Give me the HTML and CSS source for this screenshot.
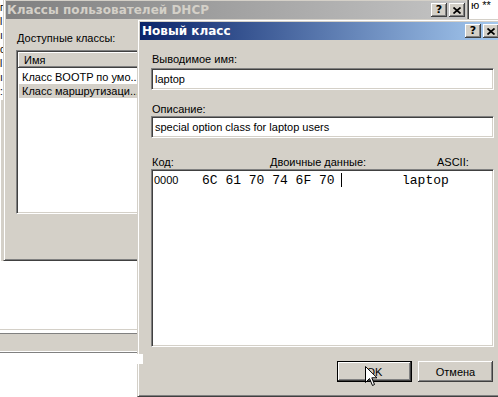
FILE: index.html
```html
<!DOCTYPE html>
<html lang="ru">
<head>
    <meta charset="UTF-8">
    <title>Новый класс</title>
    <link rel="stylesheet" href="styles.css">
</head>
<body>

<div class="screen">
    <!-- bits of the windows lying behind -->
    <div class="behind-left">
        <div>г</div>
        <div>l</div>
        <div>ı</div>
        <div>c</div>
        <div>l</div>
        <div>ı</div>
        <div>:</div>
    </div>
    <div class="behind-left-frame"></div>
    <div class="behind-right">ю **</div>
    <div class="console-status"></div>

    <!-- DHCP classes window (inactive) -->
    <div class="window classes">
        <div class="caption inactive">
            <span class="caption-text">Классы пользователей DHCP</span>
            <span class="caption-buttons">
                <span class="cap-btn help">?</span>
                <span class="cap-btn">
                    <svg width="8" height="7" viewBox="0 0 8 7"><path d="M0.5 0.5 L7.5 6.5 M7.5 0.5 L0.5 6.5" stroke="#000" stroke-width="1.7" fill="none"/></svg>
                </span>
            </span>
        </div>
        <div class="classes-body">
            <div class="field-label">Доступные классы:</div>
            <div class="listview">
                <div class="lv-header"><span class="lv-col">Имя</span></div>
                <div class="lv-rows">
                    <div class="lv-row">Класс BOOTP по умо...</div>
                    <div class="lv-row selected">Класс маршрутизаци...</div>
                </div>
            </div>
        </div>
    </div>

    <div class="notch"></div>

    <!-- New class dialog (active) -->
    <div class="window new-class">
        <div class="caption active">
            <span class="caption-text">Новый класс</span>
            <span class="caption-buttons">
                <span class="cap-btn help">?</span>
                <span class="cap-btn">
                    <svg width="8" height="7" viewBox="0 0 8 7"><path d="M0.5 0.5 L7.5 6.5 M7.5 0.5 L0.5 6.5" stroke="#000" stroke-width="1.7" fill="none"/></svg>
                </span>
            </span>
        </div>
        <div class="dialog-body">
            <div class="field-label">Выводимое имя:</div>
            <div class="textbox name-box">laptop</div>

            <div class="field-label desc-label">Описание:</div>
            <div class="textbox">special option class for laptop users</div>

            <div class="hex-labels">
                <span class="lbl-code">Код:</span>
                <span class="lbl-binary">Двоичные данные:</span>
                <span>ASCII:</span>
            </div>
            <div class="hexbox">
                <div class="hex-row">
                    <span class="hex-addr">0000</span>
                    <span class="hex-bytes">6C 61 70 74 6F 70</span>
                    <span class="hex-caret"></span>
                    <span class="hex-ascii">laptop</span>
                </div>
            </div>

            <div class="button-row">
                <button class="btn default">OK</button>
                <button class="btn">Отмена</button>
            </div>
        </div>
    </div>

    <svg class="cursor" width="13" height="21" viewBox="0 0 13 21">
        <path d="M0.5 0.5 V16.5 L4.5 12.5 L7.5 19.5 L9.5 18.5 L6.8 11.8 H12 Z" fill="#fff" stroke="#000" stroke-width="1" stroke-linejoin="miter"/>
    </svg>
</div>

</body>
</html>
```

FILE: styles.css
```css
* { box-sizing: border-box; }
body {
    margin: 0;
    background: #fff;
    font-family: "Liberation Sans", Arial, sans-serif;
    font-size: 11px;
    color: #000;
    overflow: hidden;
}
.screen {
    position: relative;
    width: 498px;
    height: 397px;
    overflow: hidden;
    background: #fff;
}

/* stuff behind */
.behind-left {
    position: absolute;
    left: 0;
    top: 1px;
    width: 3px;
    line-height: 14px;
    font-size: 10px;
}
.behind-left-frame {
    position: absolute;
    left: 0;
    top: 100px;
    width: 3px;
    height: 161px;
    background: #d4d0c8;
    border-left: 1px solid #fff;
}
.behind-right {
    position: absolute;
    left: 471px;
    top: 0;
    line-height: 11px;
    white-space: nowrap;
}
.console-status {
    position: absolute;
    left: 0;
    top: 329px;
    width: 150px;
    height: 24px;
    border-top: 1px solid #d4d0c8;
    border-bottom: 1px solid #808080;
    background: linear-gradient(#fff 0, #fff 3px, #808080 3px, #808080 4px, #d4d0c8 4px, #d4d0c8 21px, #fff 21px, #fff 22px);
}
.notch {
    position: absolute;
    left: 137px;
    top: 354px;
    width: 6px;
    height: 10px;
    background: #fff;
    z-index: 2;
}

/* windows */
.window {
    position: absolute;
    display: flex;
    flex-direction: column;
    background: #d4d0c8;
    border: 1px solid;
    border-color: #d4d0c8 #404040 #404040 #d4d0c8;
    box-shadow: inset 1px 1px #fff, inset -1px -1px #808080;
    padding: 2px;
}
.classes {
    left: 3px;
    top: -2px;
    width: 466px;
    height: 263px;
}
.new-class {
    left: 137px;
    top: 19px;
    width: 367px;
    height: 378px;
}
.caption {
    height: 18px;
    display: flex;
    align-items: center;
    padding: 0 2px 0 2px;
    font-family: "DejaVu Sans", sans-serif;
    font-weight: bold;
    white-space: nowrap;
}
.caption.inactive {
    background: linear-gradient(to right, #808080, #c4c4c4);
    color: #d4d0c8;
    padding-left: 1px;
    padding-right: 1px;
}
.caption.active {
    background: linear-gradient(to right, #0a246a, #a6caf0);
    color: #fff;
}
.caption-text {
    flex: 1;
    font-size: 12px;
}
.caption-buttons {
    display: flex;
    gap: 2px;
}
.cap-btn {
    width: 16px;
    height: 14px;
    display: flex;
    align-items: center;
    justify-content: center;
    background: #d4d0c8;
    box-shadow: inset -1px -1px #404040, inset 1px 1px #fff, inset -2px -2px #808080;
    color: #000;
}
.cap-btn.help {
    font-size: 11px;
    line-height: 14px;
    padding-bottom: 1px;
}

.field-label {
    line-height: 13px;
    padding-left: 1px;
}

/* DHCP classes list */
.classes-body {
    flex: 1;
    padding: 13px 0 0 10px;
}
.listview {
    width: 200px;
    height: 164px;
    margin-top: 5px;
    background: #fff;
    border: 1px solid;
    border-color: #808080 #fff #fff #808080;
    box-shadow: inset 1px 1px #404040, inset -1px -1px #d4d0c8;
    padding: 1px;
}
.lv-header {
    height: 16px;
    line-height: 17px;
    background: #d4d0c8;
    box-shadow: inset -1px -1px #404040, inset 1px 1px #fff, inset -2px -2px #808080;
    padding-left: 6px;
}
.lv-rows { margin-top: 2px; }
.lv-row {
    height: 14px;
    line-height: 14px;
    margin-left: 1px;
    padding-left: 3px;
    white-space: nowrap;
}
.lv-row.selected { background: #d4d0c8; }

/* New class dialog */
.dialog-body {
    flex: 1;
    display: flex;
    flex-direction: column;
    padding: 13px 0 0 11px;
}
.textbox {
    width: 343px;
    height: 22px;
    background: #fff;
    border: 1px solid;
    border-color: #808080 #fff #fff #808080;
    box-shadow: inset 1px 1px #404040, inset -1px -1px #d4d0c8;
    padding: 4px 0 0 3px;
    line-height: 13px;
    white-space: nowrap;
}
.name-box { margin-top: 2px; }
.desc-label { margin-top: 13px; }
.hex-labels {
    display: flex;
    margin-top: 18px;
    line-height: 13px;
    padding-left: 1px;
}
.lbl-code { width: 118px; }
.lbl-binary { width: 167px; }
.hexbox {
    width: 343px;
    height: 178px;
    background: #fff;
    border: 1px solid;
    border-color: #808080 #fff #fff #808080;
    box-shadow: inset 1px 1px #404040, inset -1px -1px #d4d0c8;
    padding: 3px 0 0 2px;
}
.hex-row {
    display: flex;
    align-items: flex-start;
    line-height: 15px;
    white-space: pre;
}
.hex-addr { width: 48px; }
.hex-bytes {
    width: 139px;
    font-family: "Liberation Mono", "Courier New", monospace;
    font-size: 13px;
}
.hex-caret {
    width: 1px;
    height: 14px;
    background: #000;
}
.hex-ascii {
    margin-left: 60px;
    font-family: "Liberation Mono", "Courier New", monospace;
    font-size: 13px;
}
.button-row {
    display: flex;
    justify-content: flex-end;
    gap: 6px;
    width: 343px;
    padding-right: 1px;
    margin-top: 14px;
}
.btn {
    width: 75px;
    height: 21px;
    padding: 0;
    border: none;
    font: inherit;
    color: #000;
    background: #d4d0c8;
    box-shadow: inset -1px -1px #404040, inset 1px 1px #fff, inset -2px -2px #808080;
}
.btn.default {
    border: 1px solid #000;
}

.cursor {
    position: absolute;
    left: 365px;
    top: 366px;
    z-index: 3;
}
```
